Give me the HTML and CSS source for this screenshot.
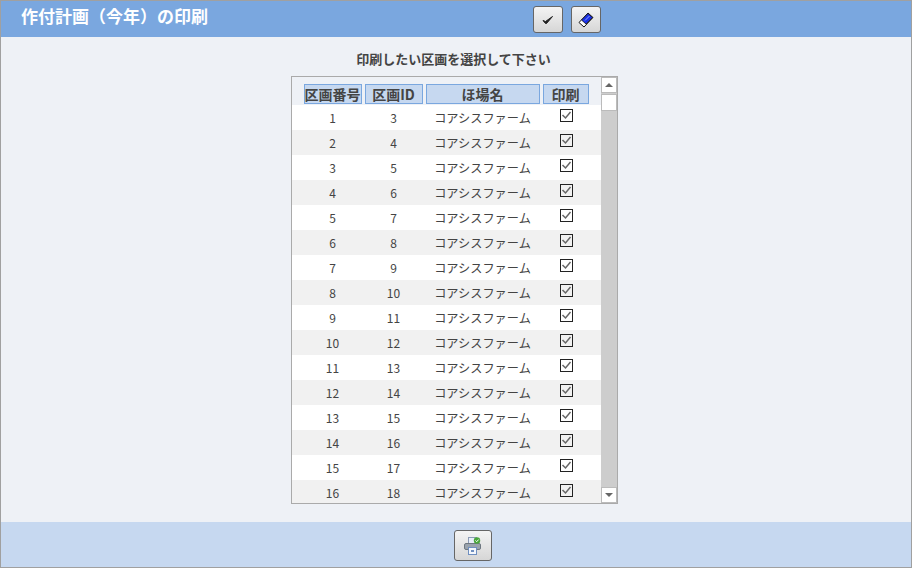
FILE: index.html
```html
<!DOCTYPE html>
<html lang="ja">
<head>
  <meta charset="UTF-8" />
  <title>作付計画（今年）の印刷</title>
  <link rel="stylesheet" href="styles.css">
</head>
<body>
  <svg class="defs" width="0" height="0">
    <symbol id="check" viewBox="0 0 14 14">
      <rect x="0.5" y="0.5" width="12" height="12" fill="none" stroke="#222" />
      <path d="M2.5 6l3 3 5-6" fill="none" stroke="#666" stroke-width="1.5" />
    </symbol>
  </svg>
  <div class="page">
    <header class="top-bar">
      <h1>作付計画（今年）の印刷</h1>
      <div class="top-buttons">
        <button class="tool-btn">
          <svg width="12" height="10" viewBox="0 0 12 10"><path d="M1 5.5l2.5 1L10.5 1.500 4.500 8.500H3.500z" fill="#222" stroke="#222" /></svg>
        </button>
        <button class="tool-btn">
          <svg width="16" height="16" viewBox="0 0 16 16">
            <path d="M1 10.500L10 1l5 4.500L6 15z" fill="#fff" stroke="#111" />
            <path d="M3.500 8L10 1.500l4.500 4L8 12z" fill="#1a30e6" stroke="#111" stroke-width="0.8" />
            <path d="M7 8.500L11.500 4" stroke="#8fa2ff" />
          </svg>
        </button>
      </div>
    </header>
    <main class="content">
      <p class="prompt">印刷したい区画を選択して下さい</p>
      <div class="list-box">
        <div class="list">
          <div class="head-row">
            <div class="head-cell">区画番号</div>
            <div class="head-cell">区画ID</div>
            <div class="head-cell">ほ場名</div>
            <div class="head-cell">印刷</div>
          </div>
          <div class="row"><span>1</span><span>3</span><span>コアシスファーム</span><svg class="check"><use href="#check" /></svg></div>
          <div class="row"><span>2</span><span>4</span><span>コアシスファーム</span><svg class="check"><use href="#check" /></svg></div>
          <div class="row"><span>3</span><span>5</span><span>コアシスファーム</span><svg class="check"><use href="#check" /></svg></div>
          <div class="row"><span>4</span><span>6</span><span>コアシスファーム</span><svg class="check"><use href="#check" /></svg></div>
          <div class="row"><span>5</span><span>7</span><span>コアシスファーム</span><svg class="check"><use href="#check" /></svg></div>
          <div class="row"><span>6</span><span>8</span><span>コアシスファーム</span><svg class="check"><use href="#check" /></svg></div>
          <div class="row"><span>7</span><span>9</span><span>コアシスファーム</span><svg class="check"><use href="#check" /></svg></div>
          <div class="row"><span>8</span><span>10</span><span>コアシスファーム</span><svg class="check"><use href="#check" /></svg></div>
          <div class="row"><span>9</span><span>11</span><span>コアシスファーム</span><svg class="check"><use href="#check" /></svg></div>
          <div class="row"><span>10</span><span>12</span><span>コアシスファーム</span><svg class="check"><use href="#check" /></svg></div>
          <div class="row"><span>11</span><span>13</span><span>コアシスファーム</span><svg class="check"><use href="#check" /></svg></div>
          <div class="row"><span>12</span><span>14</span><span>コアシスファーム</span><svg class="check"><use href="#check" /></svg></div>
          <div class="row"><span>13</span><span>15</span><span>コアシスファーム</span><svg class="check"><use href="#check" /></svg></div>
          <div class="row"><span>14</span><span>16</span><span>コアシスファーム</span><svg class="check"><use href="#check" /></svg></div>
          <div class="row"><span>15</span><span>17</span><span>コアシスファーム</span><svg class="check"><use href="#check" /></svg></div>
          <div class="row"><span>16</span><span>18</span><span>コアシスファーム</span><svg class="check"><use href="#check" /></svg></div>
        </div>
        <div class="scrollbar">
          <div class="scroll-btn"><i class="arrow-up"></i></div>
          <div class="scroll-thumb"></div>
          <div class="scroll-track"></div>
          <div class="scroll-btn"><i class="arrow-down"></i></div>
        </div>
      </div>
    </main>
    <footer class="bottom-bar">
      <button class="print-btn">
        <svg width="20" height="20" viewBox="0 0 20 20">
          <rect x="5.500" y="1.500" width="8" height="8" fill="#e8eef8" stroke="#8a9ab5" />
          <rect x="1.500" y="7.500" width="16" height="6" rx="1.500" fill="#9aa3ad" stroke="#6e7780" />
          <rect x="5.500" y="11.500" width="8" height="7" fill="#f4f7fc" stroke="#6f8fc0" />
          <rect x="8" y="14" width="3" height="2" fill="#6f8fc0" />
          <circle cx="14" cy="4.500" r="3.200" fill="#4aa63c" />
          <path d="M12.500 4.500l1.200 1.200 2-2.200" fill="none" stroke="#fff" />
        </svg>
      </button>
    </footer>
  </div>
</body>
</html>
```

FILE: styles.css
```css
* { box-sizing: border-box; }
body { margin: 0; font-family: "Noto Sans CJK JP", "Open Sans", sans-serif; color: #444; }
.defs { display: block; height: 0; }
.page {
  display: flex; flex-direction: column; width: 912px; height: 568px;
  background: #eef1f6; border: 1px solid #a0a0a0;
}
.top-bar { display: flex; height: 36px; background: #7aa7df; flex-shrink: 0; }
.top-bar h1 {
  width: 532px; margin: 0; padding: 5px 0 0 20px; font-size: 17px; font-weight: bold;
  color: #fff; line-height: 20px;
}
.top-buttons { display: flex; gap: 8px; padding-top: 5px; }
.tool-btn, .print-btn {
  display: flex; align-items: center; justify-content: center; padding: 0;
  border: 1px solid #666; border-radius: 3px;
  background: linear-gradient(#f4f4f4, #d6d6d6);
}
.tool-btn { width: 30px; height: 27px; }
.content { flex: 1; display: flex; flex-direction: column; align-items: center; }
.prompt { margin: 12px 5px 0 0; height: 19px; font-size: 13px; font-weight: bold; line-height: 19px; }
.list-box {
  display: flex; width: 327px; height: 428px; margin: 8px 4px 0 0;
  border: 1px solid #aaa; overflow: hidden;
}
.list { width: 309px; flex-shrink: 0; }
.head-row, .row { display: grid; grid-template-columns: 58px 58px 114px 46px; column-gap: 3px; padding-left: 12px; }
.head-row { padding-top: 7px; height: 28px; }
.head-cell {
  height: 20px; background: #c6d8f0; border: 1px solid #7aa7df;
  font-size: 14px; font-weight: bold; line-height: 18px; text-align: center; white-space: nowrap;
}
.row { height: 25px; background: #fff; font-size: 12px; line-height: 26px; text-align: center; }
.row:nth-child(odd) { background: #f1f1f1; }
.row span:nth-child(3) { font-size: 12.2px; }
.check { width: 14px; height: 14px; margin: 4px 0 0 17px; }
.scrollbar { display: flex; flex-direction: column; width: 16px; background: #cdcdcd; }
.scroll-btn, .scroll-thumb { background: #fff; border: 1px solid #bbb; }
.scroll-btn { display: flex; align-items: center; justify-content: center; height: 16px; }
.scroll-thumb { height: 17px; margin-top: 1px; }
.scroll-track { flex: 1; }
.arrow-up { border: 4px solid transparent; border-top: 0; border-bottom: 4px solid #666; }
.arrow-down { border: 4px solid transparent; border-bottom: 0; border-top: 4px solid #666; }
.bottom-bar { display: flex; justify-content: center; height: 45px; padding-top: 8px; margin-top: auto; background: #c6d8f0; flex-shrink: 0; }
.print-btn { width: 38px; height: 31px; margin-left: 34px; }
```
